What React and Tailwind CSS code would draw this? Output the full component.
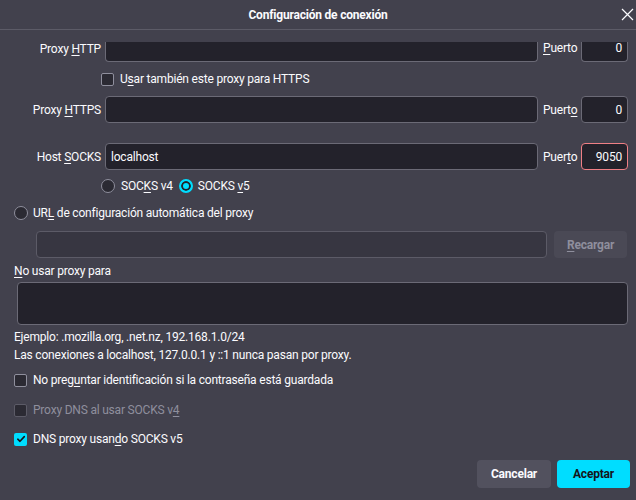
import React from 'react';

function Key({ children }) {
  return <u className="underline underline-offset-2">{children}</u>;
}

function Input({ value = '', className = '', right = false }) {
  return (
    <div
      className={`h-[27px] rounded-[4px] border border-[#6b6a76] bg-[#23222b] flex items-center px-[5px] text-[#fbfbfe] ${
        right ? 'justify-end' : ''
      } ${className}`}
    >
      {value}
    </div>
  );
}

function Checkbox({ checked = false, disabled = false }) {
  if (checked) {
    return (
      <div className="w-[13px] h-[13px] rounded-[2px] bg-[#00ddff] flex items-center justify-center shrink-0">
        <svg width="10" height="10" viewBox="0 0 10 10" fill="none">
          <path d="M1.8 5.2 L4 7.3 L8.3 2.6" stroke="#15141a" strokeWidth="1.6" strokeLinecap="round" strokeLinejoin="round" />
        </svg>
      </div>
    );
  }
  return (
    <div
      className={`w-[13px] h-[13px] rounded-[2px] border shrink-0 ${
        disabled ? 'border-[#5c5b67] bg-[#2b2a33]' : 'border-[#8f8f9d] bg-[#2b2a33]'
      }`}
    />
  );
}

function Radio({ checked = false }) {
  if (checked) {
    return (
      <div className="w-[14px] h-[14px] rounded-full border-2 border-[#00ddff] bg-[#00ddff] shadow-[inset_0_0_0_2px_#23222b] shrink-0" />
    );
  }
  return <div className="w-[14px] h-[14px] rounded-full border border-[#8f8f9d] bg-[#2b2a33] shrink-0" />;
}

function PortLabel({ children }) {
  return <span className="w-[43px] pl-[5px] whitespace-nowrap">{children}</span>;
}

export default function App() {
  return (
    <div
      className="w-[636px] h-[500px] bg-[#42414d] text-[#fbfbfe] text-[12px] tracking-[-0.2px] flex flex-col overflow-hidden"
      style={{ fontFamily: 'Roboto, "Noto Sans", sans-serif' }}
    >
      <div className="h-[30px] shrink-0 border-b border-[#5c5b67] flex items-center justify-center relative">
        <span className="font-bold text-[12px]">Configuración de conexión</span>
        <svg className="absolute right-[2px] top-[8px]" width="13" height="13" viewBox="0 0 13 13" fill="none">
          <path d="M1 1 L12 12 M12 1 L1 12" stroke="#fbfbfe" strokeWidth="1.2" />
        </svg>
      </div>

      <div className="mt-[5px] flex flex-col">
        {/* Proxy HTTP: scrolled so the field's top edge is hidden */}
        <div className="flex h-[27px]">
          <span className="w-[101px] text-right self-center whitespace-nowrap">
            Proxy <Key>H</Key>TTP
          </span>
          <div className="ml-[4px] w-[433px] h-[20px] self-end rounded-b-[4px] border border-t-0 border-[#6b6a76] bg-[#23222b]" />
          <PortLabel>
            <span className="leading-[27px]">
              <Key>P</Key>uerto
            </span>
          </PortLabel>
          <div className="w-[47px] h-[20px] self-end rounded-b-[4px] border border-t-0 border-[#6b6a76] bg-[#23222b] flex justify-end px-[5px] leading-[12px]">
            0
          </div>
        </div>

        <div className="flex items-center h-[18px] mt-[8px] pl-[101px] gap-[6px]">
          <Checkbox />
          <span>
            U<Key>s</Key>ar también este proxy para HTTPS
          </span>
        </div>

        {/* Proxy HTTPS */}
        <div className="flex items-center h-[27px] mt-[8px]">
          <span className="w-[101px] text-right whitespace-nowrap">
            Proxy <Key>H</Key>TTPS
          </span>
          <Input className="ml-[4px] w-[433px]" />
          <PortLabel>
            Puert<Key>o</Key>
          </PortLabel>
          <Input className="w-[47px]" value="0" right />
        </div>

        {/* SOCKS */}
        <div className="flex items-center h-[27px] mt-[20px]">
          <span className="w-[101px] text-right whitespace-nowrap">
            Host <Key>S</Key>OCKS
          </span>
          <Input className="ml-[4px] w-[433px]" value="localhost" />
          <PortLabel>
            Puer<Key>t</Key>o
          </PortLabel>
          <div className="w-[47px] h-[27px] rounded-[4px] border border-[#ef7f85] bg-[#23222b] flex items-center justify-end px-[5px]">
            9050
          </div>
        </div>

        <div className="flex items-center h-[18px] mt-[7px] pl-[101px]">
          <Radio />
          <span className="ml-[6px]">
            SOC<Key>K</Key>S v4
          </span>
          <span className="ml-[6px] flex">
            <Radio checked />
          </span>
          <span className="ml-[5px]">
            SOCKS <Key>v</Key>5
          </span>
        </div>

        {/* PAC URL */}
        <div className="flex items-center h-[18px] mt-[9px] pl-[14px] gap-[5px]">
          <Radio />
          <span>
            UR<Key>L</Key> de configuración automática del proxy
          </span>
        </div>

        <div className="flex items-center h-[27px] mt-[9px] pl-[36px]">
          <div className="w-[511px] h-[27px] rounded-[4px] border border-[#5c5b67] bg-[#373641]" />
          <div className="ml-[7px] w-[73px] h-[27px] rounded-[4px] bg-[#4a4955] flex items-center justify-center font-bold text-[#8f8f9d]">
            <span>
              <Key>R</Key>ecargar
            </span>
          </div>
        </div>

        <div className="flex items-center h-[18px] mt-[4px] pl-[14px]">
          <span>
            <Key>N</Key>o usar proxy para
          </span>
        </div>

        <div className="mt-[2px] ml-[17px] w-[611px] h-[43px] rounded-[4px] border border-[#6b6a76] bg-[#23222b]" />

        <div className="flex items-center h-[18px] mt-[3px] pl-[14px]">Ejemplo: .mozilla.org, .net.nz, 192.168.1.0/24</div>
        <div className="flex items-center h-[18px] pl-[14px]">
          Las conexiones a localhost, 127.0.0.1 y ::1 nunca pasan por proxy.
        </div>

        <div className="flex items-center h-[18px] mt-[7px] pl-[14px] gap-[6px]">
          <Checkbox />
          <span>
            No preg<Key>u</Key>ntar identificación si la contraseña está guardada
          </span>
        </div>

        <div className="flex items-center h-[18px] mt-[12px] pl-[14px] gap-[6px] text-[#8f8f9d]">
          <Checkbox disabled />
          <span>
            Proxy DNS al usar SOCKS v<Key>4</Key>
          </span>
        </div>

        <div className="flex items-center h-[18px] mt-[11px] pl-[14px] gap-[6px]">
          <Checkbox checked />
          <span>
            DNS proxy usan<Key>d</Key>o SOCKS v5
          </span>
        </div>

        <div className="flex justify-end mt-[12px] pr-[6px] gap-[6px]">
          <button className="w-[74px] h-[28px] rounded-[4px] bg-[#52515e] font-bold text-[#fbfbfe]">Cancelar</button>
          <button className="w-[73px] h-[28px] rounded-[4px] bg-[#00ddff] font-bold text-[#15141a]">Aceptar</button>
        </div>
      </div>
    </div>
  );
}
